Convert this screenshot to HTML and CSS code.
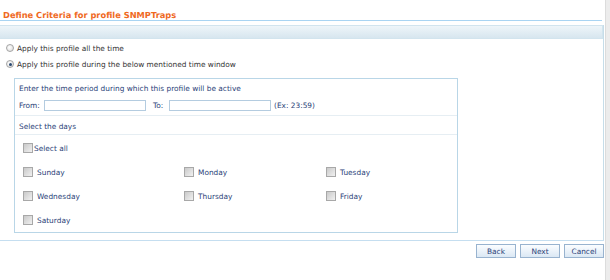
FILE: index.html
```html
<!DOCTYPE html>
<html lang="en">
<head>
  <meta charset="UTF-8">
  <title>Define Criteria</title>
  <link rel="stylesheet" href="styles.css">
</head>
<body>

<div class="page">
  <h1 class="page-title">Define Criteria for profile SNMPTraps</h1>

  <div class="panel">
    <div class="panel-bar"></div>

    <div class="choices">
      <label class="choice"><span class="radio"></span>Apply this profile all the time</label>
      <label class="choice"><span class="radio on"></span>Apply this profile during the below mentioned time window</label>
    </div>

    <div class="window-box">
      <div class="box-row">Enter the time period during which this profile will be active</div>
      <div class="box-row time-row">
        <span class="lbl">From:</span>
        <span class="field"></span>
        <span class="lbl to">To:</span>
        <span class="field"></span>
        <span class="hint">(Ex: 23:59)</span>
      </div>
      <div class="box-row section">Select the days</div>

      <div class="days">
        <label class="day all"><span class="check"></span>Select all</label>
        <div class="day-grid">
          <label class="day"><span class="check"></span>Sunday</label>
          <label class="day"><span class="check"></span>Monday</label>
          <label class="day"><span class="check"></span>Tuesday</label>
          <label class="day"><span class="check"></span>Wednesday</label>
          <label class="day"><span class="check"></span>Thursday</label>
          <label class="day"><span class="check"></span>Friday</label>
          <label class="day"><span class="check"></span>Saturday</label>
        </div>
      </div>
    </div>
  </div>

  <div class="actions">
    <button class="btn">Back</button>
    <button class="btn">Next</button>
    <button class="btn">Cancel</button>
  </div>
</div>

<div class="scroll-edge"></div>

</body>
</html>
```

FILE: styles.css
```css
body {
  margin: 0;
  background: #fff;
  font-family: "DejaVu Sans", Verdana, sans-serif;
  font-size: 7.4px;
  color: #333;
  text-rendering: geometricPrecision;
}

.page {
  width: 604px;
}

/* titre */
.page-title {
  margin: 0;
  height: 21px;
  box-sizing: border-box;
  padding: 10px 0 0 3px;
  font-size: 8.3px;
  line-height: 10px;
  font-weight: bold;
  color: #ef6a1f;
  border-bottom: 1px solid #a9d4f2;
  width: 602px;
}

.panel {
  margin-top: 4px;
  border-right: 1px solid #c6dde9;
  padding-bottom: 7px;
}

.panel-bar {
  height: 12px;
  border: 1px solid #d2e4ee;
  border-left: none;
  background: linear-gradient(to bottom, #eef5f9, #d7e6ef);
}

.choices {
  padding: 1px 0 0 6px;
}

.choice {
  display: flex;
  align-items: center;
  height: 16px;
}

.radio {
  width: 6px;
  height: 6px;
  border: 1px solid #a5a5a5;
  border-radius: 50%;
  background: radial-gradient(circle at 40% 40%, #fff, #d8d8d8);
  margin-right: 3px;
  position: relative;
}

.radio.on::after {
  content: "";
  position: absolute;
  left: 1.5px;
  top: 1.5px;
  width: 3px;
  height: 3px;
  border-radius: 50%;
  background: #2b4a72;
}

/* kutu */
.window-box {
  margin: 6px 0 0 14px;
  width: 442px;
  border: 1px solid #b9d6e7;
  color: #2b3f78;
}

.box-row {
  padding: 1px 4px 0;
  height: 16px;
  display: flex;
  align-items: center;
}

.time-row {
  padding-bottom: 2px;
  border-bottom: 1px solid #e6eef3;
}

.lbl {
  width: 25px;
}

.lbl.to {
  width: 16px;
  margin-left: 7px;
}

.field {
  width: 100px;
  height: 9px;
  border: 1px solid #b4cce0;
  background: #fff;
}

.hint {
  margin-left: 3px;
}

.section {
  padding-top: 2px;
  height: 16px;
  border-bottom: 1px solid #e6eef3;
}

.days {
  padding: 6px 0 0 8px;
}

.day {
  display: flex;
  align-items: center;
  height: 24px;
}

.day.all {
  height: 14px;
  margin-bottom: 5px;
}

.check {
  width: 8px;
  height: 8px;
  border: 1px solid #a8a8a8;
  background: linear-gradient(135deg, #c9c9c9, #f1f1f1);
  margin-right: 4px;
}

.all .check {
  margin-right: 1px;
}

.day-grid {
  display: grid;
  grid-template-columns: 161px 142px 1fr;
}

/* butonlar */
.actions {
  border-top: 1px solid #c5def0;
  display: flex;
  justify-content: flex-end;
  gap: 4px;
  padding: 3px 0 0 0;
}

.btn {
  width: 40px;
  height: 14px;
  padding: 0;
  border: 1px solid #98b3cf;
  background: linear-gradient(to bottom, #fbfdff, #dbe8f4);
  font-family: "DejaVu Sans", Verdana, sans-serif;
  font-size: 7.4px;
  color: #2b3f78;
}

.scroll-edge {
  position: fixed;
  top: 0;
  right: 0;
  width: 4px;
  height: 100%;
  background: #ececec;
  border-left: 1px solid #dcdcdc;
}
```
